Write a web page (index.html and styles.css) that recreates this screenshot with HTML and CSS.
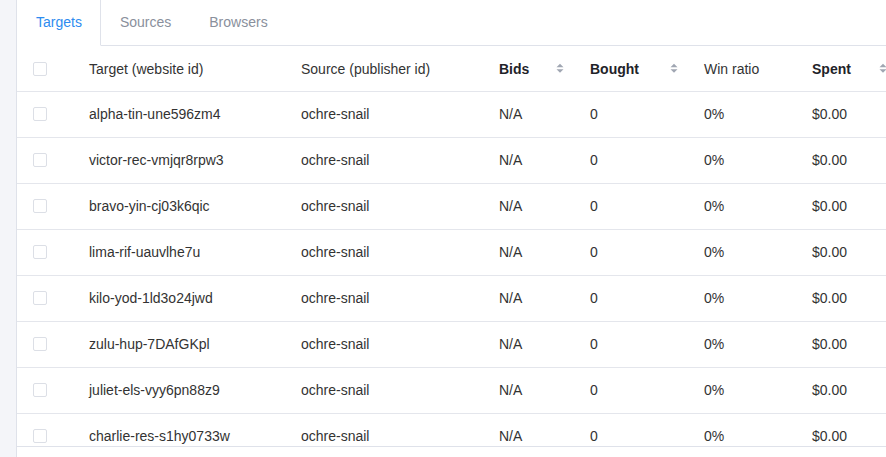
FILE: index.html
```html
<!DOCTYPE html>
<html>
<head>
<meta charset="utf-8">
<link rel="stylesheet" href="styles.css">
</head>
<body>
<div class="page">
  <div class="side"></div>
  <div class="panel">
    <div class="tabs">
      <div class="tab active">Targets</div>
      <div class="tab">Sources</div>
      <div class="tab">Browsers</div>
      <div class="tab-fill"></div>
    </div>
    <div class="table-wrap">
      <table class="grid">
        <colgroup>
          <col class="c-check"><col class="c-target"><col class="c-source"><col class="c-bids"><col class="c-bought"><col class="c-win"><col class="c-spent">
        </colgroup>
        <thead>
          <tr>
            <th><span class="cb"></span></th>
            <th>Target (website id)</th>
            <th>Source (publisher id)</th>
            <th class="sortable"><div class="th-in"><b>Bids</b><svg class="sort" width="8" height="11" viewBox="0 0 8 11"><path d="M4 0.8 L7.5 4.3 L0.5 4.3 Z" fill="#a0a6b2"/><path d="M0.5 6.3 L7.5 6.3 L4 9.8 Z" fill="#a0a6b2"/></svg></div></th>
            <th class="sortable"><div class="th-in"><b>Bought</b><svg class="sort" width="8" height="11" viewBox="0 0 8 11"><path d="M4 0.8 L7.5 4.3 L0.5 4.3 Z" fill="#a0a6b2"/><path d="M0.5 6.3 L7.5 6.3 L4 9.8 Z" fill="#a0a6b2"/></svg></div></th>
            <th>Win ratio</th>
            <th class="sortable"><div class="th-in"><b>Spent</b><svg class="sort" width="8" height="11" viewBox="0 0 8 11"><path d="M4 0.8 L7.5 4.3 L0.5 4.3 Z" fill="#a0a6b2"/><path d="M0.5 6.3 L7.5 6.3 L4 9.8 Z" fill="#a0a6b2"/></svg></div></th>
          </tr>
        </thead>
        <tbody>
          <tr><td><span class="cb"></span></td><td>alpha-tin-une596zm4</td><td>ochre-snail</td><td>N/A</td><td>0</td><td>0%</td><td>$0.00</td></tr>
          <tr><td><span class="cb"></span></td><td>victor-rec-vmjqr8rpw3</td><td>ochre-snail</td><td>N/A</td><td>0</td><td>0%</td><td>$0.00</td></tr>
          <tr><td><span class="cb"></span></td><td>bravo-yin-cj03k6qic</td><td>ochre-snail</td><td>N/A</td><td>0</td><td>0%</td><td>$0.00</td></tr>
          <tr><td><span class="cb"></span></td><td>lima-rif-uauvlhe7u</td><td>ochre-snail</td><td>N/A</td><td>0</td><td>0%</td><td>$0.00</td></tr>
          <tr><td><span class="cb"></span></td><td>kilo-yod-1ld3o24jwd</td><td>ochre-snail</td><td>N/A</td><td>0</td><td>0%</td><td>$0.00</td></tr>
          <tr><td><span class="cb"></span></td><td>zulu-hup-7DAfGKpl</td><td>ochre-snail</td><td>N/A</td><td>0</td><td>0%</td><td>$0.00</td></tr>
          <tr><td><span class="cb"></span></td><td>juliet-els-vyy6pn88z9</td><td>ochre-snail</td><td>N/A</td><td>0</td><td>0%</td><td>$0.00</td></tr>
          <tr><td><span class="cb"></span></td><td>charlie-res-s1hy0733w</td><td>ochre-snail</td><td>N/A</td><td>0</td><td>0%</td><td>$0.00</td></tr>
        </tbody>
      </table>
    </div>
  </div>
</div>
</body>
</html>
```

FILE: styles.css
```css
html, body {
  margin: 0;
  padding: 0;
  background: #ffffff;
  overflow: hidden;
}
body {
  font-family: "Liberation Sans", Arial, sans-serif;
  font-size: 14px;
  color: #333;
}
.page {
  display: flex;
  height: 457px;
  width: 886px;
  overflow: hidden;
}
.side {
  flex: 0 0 16px;
  background: #f4f5f9;
  border-right: 1px solid #dfe2ea;
}
.panel {
  flex: 1 0 auto;
  width: 900px;
  background: #fff;
}
.tabs {
  display: flex;
  height: 46px;
}
.tab {
  box-sizing: border-box;
  height: 46px;
  line-height: 44px;
  padding: 0 19px;
  color: #8a909c;
  border-bottom: 1px solid #dfe2ea;
}
.tab.active {
  color: #2d8cf0;
  border-bottom: 1px solid #fff;
  border-right: 1px solid #dfe2ea;
  padding: 0 18px 0 19px;
}
.tab-fill {
  box-sizing: border-box;
  height: 46px;
  flex: 1;
  border-bottom: 1px solid #dfe2ea;
}
.table-wrap {
  height: 400px;
  overflow: hidden;
  border-bottom: 1px solid #dfe2ea;
}
.grid {
  border-collapse: collapse;
  table-layout: fixed;
  width: 880px;
}
.c-check { width: 56px; }
.c-target { width: 212px; }
.c-source { width: 198px; }
.c-bids { width: 91px; }
.c-bought { width: 114px; }
.c-win { width: 108px; }
.c-spent { width: 101px; }
.grid th, .grid td {
  height: 45px;
  padding: 0 0 0 16px;
  text-align: left;
  vertical-align: middle;
  border-bottom: 1px solid #e4e6ec;
  font-weight: normal;
  color: #333;
  white-space: nowrap;
  box-sizing: content-box;
}
.grid td {
  color: #333;
  padding-bottom: 1px;
  height: 44px;
}
.grid th b {
  font-weight: bold;
  color: #1f2329;
}
.th-in {
  display: flex;
  align-items: center;
  justify-content: space-between;
  padding-right: 10px;
}
.sort {
  display: block;
}
.cb {
  display: block;
  width: 12px;
  height: 12px;
  border: 1px solid #dcdfe6;
  border-radius: 2px;
  background: #fff;
}
```
